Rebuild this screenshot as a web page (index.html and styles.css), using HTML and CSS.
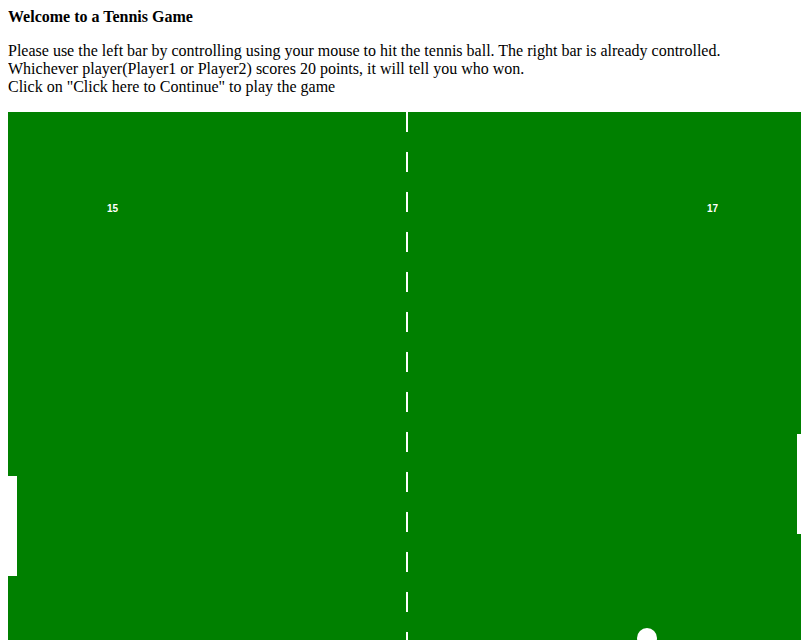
FILE: index.html
```html
<!DOCTYPE html>
<html>
<head>
<meta charset="utf-8">
<title>Tennis Game</title>
<link rel="stylesheet" href="styles.css">
</head>
<body>
<div class="title">Welcome to a Tennis Game</div>
<p class="intro">Please use the left bar by controlling using your mouse to hit the tennis ball. The right bar is already controlled.<br>
Whichever player(Player1 or Player2) scores 20 points, it will tell you who won.<br>
Click on "Click here to Continue" to play the game</p>
<div class="court">
  <div class="net"></div>
  <span class="score score-left">15</span>
  <span class="score score-right">17</span>
  <div class="paddle paddle-left"></div>
  <div class="paddle paddle-right"></div>
  <div class="ball"></div>
</div>
</body>
</html>
```
FILE: styles.css
```css
body {
  margin: 8px;
  font-family: "Liberation Serif", "Times New Roman", serif;
  font-size: 16px;
  color: #000;
  background: #fff;
}
.title {
  font-weight: bold;
}
.intro {
  margin: 16px 0 16px;
}
.court {
  position: relative;
  width: 800px;
  height: 528px;
  margin-left: -1px;
  background: #008000;
  overflow: hidden;
}
.net {
  position: absolute;
  left: 399px;
  top: 0;
  width: 2px;
  height: 100%;
  background: repeating-linear-gradient(to bottom, #fff 0, #fff 20px, transparent 20px, transparent 40px);
}
.score {
  position: absolute;
  top: 91px;
  font-family: "Liberation Sans", Arial, sans-serif;
  font-size: 10px;
  font-weight: bold;
  line-height: 12px;
  color: #fff;
}
.score-left {
  left: 100px;
}
.score-right {
  left: 700px;
}
.paddle {
  position: absolute;
  width: 10px;
  height: 100px;
  background: #fff;
}
.paddle-left {
  left: 0;
  top: 364px;
}
.paddle-right {
  right: 0;
  top: 322px;
}
.ball {
  position: absolute;
  left: 630px;
  top: 516px;
  width: 20px;
  height: 20px;
  border-radius: 50%;
  background: #fff;
}
```
